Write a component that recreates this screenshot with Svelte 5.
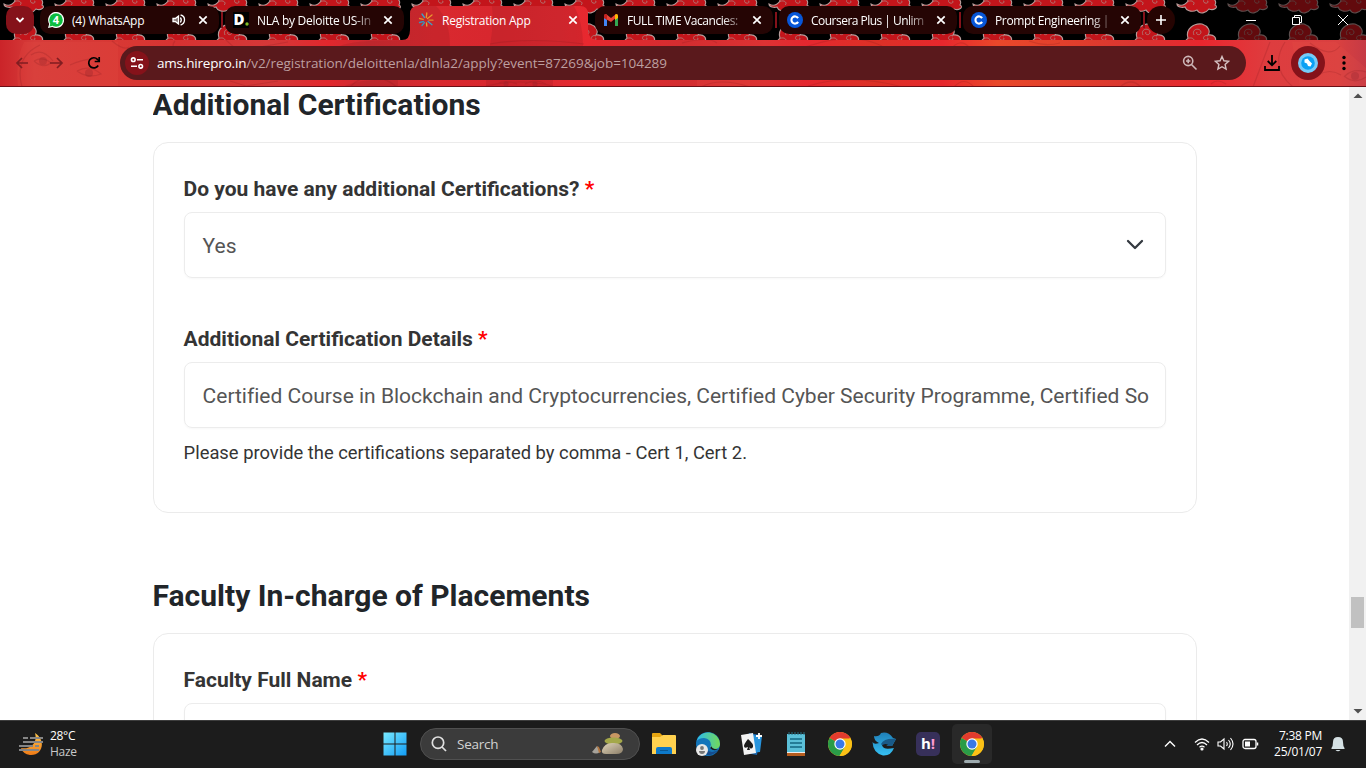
<script>
  const tabs = [
    { title: '(4) WhatsApp', icon: 'wa', audio: true, w: 179, track: -0.17 },
    { title: 'NLA by Deloitte US-In', icon: 'del', fade: true, w: 179, track: -0.27 },
    { title: 'Registration App', icon: 'reg', active: true, w: 179, track: -0.25 },
    { title: 'FULL TIME Vacancies:', icon: 'gmail', fade: true, w: 178, track: -0.42 },
    { title: 'Coursera Plus | Unlim', icon: 'cour', fade: true, w: 178, track: -0.52 },
    { title: 'Prompt Engineering |', icon: 'cour', fade: true, w: 178, track: -0.35 }
  ];
  const clouds = Array.from({ length: 28 }, (_, i) => i * 51 - 47);
</script>

{#snippet chrome()}
  <svg width="24" height="24" viewBox="0 0 24 24">
    <circle cx="12" cy="12" r="12" fill="#fbc116" />
    <path d="M12 12 1.6 6A12 12 0 0 1 22.4 6Z" fill="#e33b2e" />
    <path d="M1.6 6A12 12 0 0 0 11.5 24L17.2 15 12 12Z" fill="#2a9c48" />
    <path d="M12 6.5H22.6A12 12 0 0 1 11.5 24L17 14.5Z" fill="#fbc116" />
    <circle cx="12" cy="12" r="5.7" fill="#fff" />
    <circle cx="12" cy="12" r="4.5" fill="#3978e8" />
  </svg>
{/snippet}

<div class="screen">
  <header>
    <svg class="theme" width="1366" height="87" viewBox="0 0 1366 87">
      <defs>
        <linearGradient id="bar" x1="0" x2="1366" y1="0" y2="0" gradientUnits="userSpaceOnUse">
          <stop offset="0" stop-color="#cb2429" /><stop offset=".025" stop-color="#d63c3a" />
          <stop offset=".1" stop-color="#d83733" /><stop offset=".13" stop-color="#d73232" />
          <stop offset=".2" stop-color="#d43838" /><stop offset=".24" stop-color="#e2272d" />
          <stop offset=".27" stop-color="#c92b31" /><stop offset=".32" stop-color="#d9292f" />
          <stop offset=".36" stop-color="#d8272e" /><stop offset=".41" stop-color="#e02a31" />
          <stop offset=".43" stop-color="#e8282f" /><stop offset=".5" stop-color="#d32d30" />
          <stop offset=".56" stop-color="#dd3233" /><stop offset=".59" stop-color="#e5272f" />
          <stop offset=".64" stop-color="#dc3126" /><stop offset=".69" stop-color="#e7272d" />
          <stop offset=".73" stop-color="#e9482a" /><stop offset=".79" stop-color="#e03d2c" />
          <stop offset=".83" stop-color="#d93531" /><stop offset=".88" stop-color="#ea262e" />
          <stop offset=".93" stop-color="#de3d3f" /><stop offset=".98" stop-color="#d94040" /><stop offset="1" stop-color="#c53a45" />
        </linearGradient>
        <clipPath id="toolbar-shape">
          <path d="M0 40H402Q410 40 410 30V14Q410 6 418 6H580Q588 6 588 14V30Q588 40 598 40H1366V87H0Z" />
        </clipPath>
        <g id="cloud">
          <path d="M0 17C5 20 8 18 11 14C8 5 17-1 25 0C31 2 34 7 31 11C37 10 40 14 38 18C42 20 37 24 32 22C29 26 23 28 20 23C14 26 9 23 8 20C5 21 0 20 0 17Z" fill="#c3151b" stroke="#b69b99" stroke-width="1.1" />
          <path d="M17 11C14 5 23 3 24 8C24 12 18 11 20 8M31 12C27 10 25 15 28 16C31 17 32 14 30 14M10 15C15 12 19 16 16 18" fill="none" stroke="#af8582" stroke-width=".8" />
        </g>
      </defs>
      <rect width="1366" height="40" fill="#000" />
      {#each clouds as x}
        <g opacity={x > 1200 ? 0.5 : 1}>
          <use href="#cloud" x={x} y="-13" />
          <use href="#cloud" x={x} y="24" />
        </g>
      {/each}
      <g clip-path="url(#toolbar-shape)">
        <rect width="1366" height="87" fill="url(#bar)" />
        <path d="M410 6H436Q450 20 450 46H340Q352 40 410 40ZM492 6H574Q583 22 583 46H490Q494 24 492 6ZM486 80H553V87H486ZM342 87Q360 78 398 80V87Z" fill="#a01c25" opacity=".28" />
        <path d="M18 87Q15 60 24 42H118V87ZM697 80H750V87H697ZM1292 42H1336L1366 68V87H1300Z" fill="#ef5a4c" opacity=".16" />
        <g fill="none" stroke="#7c1720" stroke-width="1.2" opacity=".2">
          <path d="M22 87C17 69 21 54 40 45M31 55Q42 47 53 61M34 61Q43 56 51 63Q43 69 34 61M70 65Q88 57 100 60M77 71Q90 64 101 74Q88 79 77 71M112 41Q124 51 129 47M175 41Q170 47 178 52M226 40 238 51 288 42M230 81 246 86 278 81M350 87Q370 66 397 87M486 86Q520 78 553 86M497 84Q505 79 517 84M525 84Q535 78 546 84M490 44Q530 37 584 44M682 43Q708 36 717 43M701 87Q720 77 750 87M800 49Q850 30 882 46M808 86Q850 73 903 87M950 50Q960 37 970 48M954 87Q964 76 974 87M1029 41Q1045 47 1060 43M1120 87Q1131 77 1141 87M1211 84Q1217 78 1226 84M1253 87 1270 42M1293 87Q1269 67 1285 42M1310 43Q1330 59 1340 46M1318 75Q1330 68 1341 75M1345 76Q1353 68 1366 72M1344 76Q1355 85 1366 77" />
        </g>
        <g fill="#89212a" opacity=".28">
          <circle cx="43" cy="61" r="4" /><circle cx="89" cy="73" r="4" /><circle cx="1355" cy="76" r="4" /><circle cx="506" cy="84" r="2.5" /><circle cx="535" cy="84" r="2.5" />
        </g>
      </g>
      <rect y="86" width="1366" height="1" fill="#6c0f16" />
    </svg>

    <div class="strip">
      <div class="round"><svg width="28" height="28" fill="none" stroke="#fff" stroke-width="1.8"><path d="m10.5 12 3.500 3.500 3.500-3.500" /></svg></div>
      {#each tabs as t}
        <div class="tab {t.icon}" class:active={t.active} style="width:{t.w}px">
          <svg class="fav" width="16" height="16" viewBox="0 0 16 16">
            {#if t.icon === 'wa'}
              <path d="M0 16 1.2 12A8 8 0 1 1 4.3 15Z" fill="#fff" /><circle cx="8" cy="8" r="6.8" fill="#0cbd3f" /><path d="m1.500 14.600.9-3.300 2.500 2.500Z" fill="#0cbd3f" />
              <text x="8" y="12" text-anchor="middle" font-family="Noto Sans" font-size="11" font-weight="700" fill="#fff">4</text>
            {:else if t.icon === 'del'}
              <rect width="16" height="16" fill="#000" /><text x="0.5" y="13" font-family="Open Sans" font-size="15" font-weight="800" fill="#fff">D</text><circle cx="14" cy="12" r="1.700" fill="#83bd25" />
            {:else if t.icon === 'reg'}
              <g stroke-width="1.300" stroke-linecap="round"><path d="M8.300 5.500 8.800 1M9.500 6.500 14 3" stroke="#e9992e" /><path d="M6.500 5.500 4 2M10 9.500l4 3.200" stroke="#3b9fc8" /><path d="M5.200 7.300 1.500 6.500M11 8.200h4" stroke="#e4882d" /><path d="m5.500 9.500-4 1M6.500 10.500 4 13.500" stroke="#3b91b8" /><path d="m8.500 11 .3 3" stroke="#dcaa33" /></g>
            {:else if t.icon === 'gmail'}
              <path d="M1 14V4h3v10Z" fill="#4285f4" /><path d="M12 14V4h3v10Z" fill="#34a853" /><path d="M1 6V4Q1 2 3 2L8 6 13 2Q15 2 15 4L8 10Z" fill="#ea4335" /><path d="M1 6V4Q1 2 3 2L4 3V8Z" fill="#c5221f" /><path d="M12 8V3l1-1Q15 2 15 4V6Z" fill="#fbbc04" />
            {:else}
              <circle cx="8" cy="8" r="8" fill="#0756d8" /><path d="M11.100 6.100A3.600 3.600 0 1 0 11.100 9.900" fill="none" stroke="#fff" stroke-width="2.100" />
            {/if}
          </svg>
          <span class="title" class:fade={t.fade} style="letter-spacing:{t.track}px">{t.title}</span>
          {#if t.audio}
            <svg width="14" height="14" viewBox="0 0 14 14" fill="none" stroke="#fff" stroke-width="1.300"><path d="M1 5.500v3h2.300L6.500 11V3L3.300 5.500Z" fill="#fff" fill-opacity=".45" /><path d="M8.400 4.500Q10.200 7 8.400 9.500M8.600 2Q12.700 3 12.500 7T8.600 12" /></svg>
          {/if}
          <svg class="close" width="10" height="10" stroke="#fff" stroke-width="1.700"><path d="m1.300 1.300 7.400 7.400m0-7.400-7.400 7.400" /></svg>
        </div>
        {#if !t.active && !(t.icon === 'del')}<i class="sep"></i>{:else}<i class="gap"></i>{/if}
      {/each}
      <div class="round plus"><svg width="28" height="28" stroke="#fff" stroke-width="1.600"><path d="M14 9v10M9 14h10" /></svg></div>
      <svg class="win" width="110" height="20" fill="none" stroke="#fff" stroke-width="1"><path d="M6 10.500h10M52.500 7.500h7v7h-7zM54.500 7.500V5.500H60q1.500 0 1.500 1.500v5.500H60M98 5l10 10m0-10-10 10" /></svg>
    </div>

    <div class="bar">
      <svg width="14" height="14" class="back" fill="none" stroke="#811d21" stroke-width="1.700"><path d="M13 7H2m5-5L2 7l5 5" /></svg>
      <svg width="14" height="14" class="fwd" fill="none" stroke="#811d21" stroke-width="1.700"><path d="M0 7h12M7 2l5 5-5 5" /></svg>
      <svg width="14" height="14" class="reload" fill="none" stroke="#000" stroke-width="1.700"><path d="M11.200 9.500A5.100 5.100 0 1 1 10.500 3.300L12 5" /><path d="M12.200 1v4.500H7.700" /></svg>
      <div class="omni">
        <div class="chip"><svg width="14" height="14" fill="none" stroke="#fff" stroke-width="1.600"><circle cx="3.300" cy="3.700" r="1.800" /><path d="M7 3.700h6M1 10.300h6" /><circle cx="10.700" cy="10.300" r="1.800" /></svg></div>
        <div class="url"><b>ams.hirepro.in</b>/v2/registration/deloittenla/dlnla2/apply?event=87269&amp;job=104289</div>
        <svg class="mag" width="16" height="16" fill="none" stroke="#cdb7b8" stroke-width="1.600"><circle cx="6.200" cy="6" r="4.600" /><path d="m9.500 9.500 5 5M4 6h4.400M6.200 3.800v4.400" /></svg>
        <svg class="star" width="16" height="16" fill="none" stroke="#d5c1c2" stroke-width="1.400"><path d="m8 1.500 1.900 4.300 4.700.5-3.500 3.100 1 4.700L8 11.700l-4.100 2.400 1-4.700-3.500-3.100 4.700-.5Z" /></svg>
      </div>
      <svg class="down" width="16" height="16" fill="none" stroke="#000" stroke-width="1.800"><path d="M8 0v10M3.700 6 8 10.300 12.300 6M1 11v4h14v-4" /></svg>
      <div class="profile"><svg width="20" height="20"><circle cx="10" cy="10" r="10" fill="#76cbf8" /><circle cx="10" cy="10" r="6.800" fill="#0aa1f4" /><path d="M6.500 6.500 9.500 5.500 11.500 8 14 10.500 12.500 13.500 10 13 9 10.500 6.500 9.500Z" fill="#fff" /></svg></div>
      <svg class="dots" width="4" height="16"><circle cx="2" cy="2.500" r="1.700" /><circle cx="2" cy="8" r="1.700" /><circle cx="2" cy="13.500" r="1.700" /></svg>
    </div>
  </header>

  <main>
    <div class="content">
      <h2>Additional Certifications</h2>
      <section class="card first">
        <div class="label">Do you have any additional Certifications? <em>*</em></div>
        <div class="field">Yes<svg width="18" height="12" fill="none" stroke="#343a40" stroke-width="2.300" stroke-linecap="round" stroke-linejoin="round"><path d="m2 2 7 7 7-7" /></svg></div>
        <div class="label second">Additional Certification Details <em>*</em></div>
        <div class="field long">Certified Course in Blockchain and Cryptocurrencies, Certified Cyber Security Programme, Certified So</div>
        <p>Please provide the certifications separated by comma - Cert 1, Cert 2.</p>
      </section>
      <h2 class="lower">Faculty In-charge of Placements</h2>
      <section class="card">
        <div class="label">Faculty Full Name <em>*</em></div>
        <div class="field"></div>
      </section>
    </div>
    <div class="scroll">
      <svg width="17" height="17"><path d="M4.500 11h9L9 6.500Z" fill="#505050" /></svg>
      <div class="thumb"></div>
      <svg class="end" width="17" height="17"><path d="M4.500 6h9L9 10.500Z" fill="#505050" /></svg>
    </div>
  </main>

  <footer>
    <div class="weather">
      <svg width="26" height="26"><defs><linearGradient id="moon" x2="0" y2="1"><stop stop-color="#ffc64a" /><stop offset="1" stop-color="#ef7b17" /></linearGradient></defs><path d="M17 2C29 10 24 25 12 24Q5 23 3 17C12 19 20 12 17 2Z" fill="url(#moon)" /><path d="M5 7h5m2 0h13M5 11h20M1 15h14m2 0h4M1 19h20" stroke="#858585" stroke-width="1.800" /></svg>
      <div>28°C<br /><span>Haze</span></div>
    </div>
    <div class="apps">
      <svg class="start" width="24" height="24"><defs><linearGradient id="win" x2="24" y2="24" gradientUnits="userSpaceOnUse"><stop stop-color="#7aebff" /><stop offset="1" stop-color="#109bf5" /></linearGradient></defs><path d="M.5.500h11v11H.500ZM12.500.500h11v11h-11ZM.500 12.500h11v11H.500ZM12.500 12.500h11v11h-11Z" fill="url(#win)" /></svg>
      <div class="search">
        <svg width="16" height="16" fill="none" stroke="#e0e0e0" stroke-width="1.700"><circle cx="7" cy="6.700" r="5.700" /><path d="m11 11 4 4" /></svg>
        <span>Search</span>
        <svg class="stones" width="34" height="24"><defs><linearGradient id="rock" x2="1" y2="1"><stop stop-color="#e1d5ba" /><stop offset="1" stop-color="#8b7e68" /></linearGradient></defs><ellipse cx="24" cy="4" rx="5" ry="3" fill="#c99763" /><ellipse cx="22.500" cy="9" rx="9" ry="3.500" fill="#a4a849" /><path d="M11 18Q14 10 23 11Q31 11 32 17Q32 22 25 22H15Q10 22 11 18Z" fill="url(#rock)" /><path d="m1 20 5-6 3 6q-4 3-8 0Z" fill="#a7a39b" /><path d="m6 14 2 1 2 5-2 1Z" fill="#b4763e" /></svg>
      </div>
      <svg width="24" height="24"><path d="M0 2Q0 1 1 1h7l3 3v4H0Z" fill="#e6a511" /><path d="M0 5h8l3-2h12q1 0 1 1v18H0Z" fill="#ffd14f" /><path d="M4 22v-5q0-2 2-2h12q2 0 2 2v5Z" fill="#0d79c9" /><path d="M8 18.500h8" stroke="#095895" /></svg>
      <svg width="24" height="24"><defs><linearGradient id="edge" x2="1"><stop stop-color="#2bbcef" /><stop offset="1" stop-color="#73d957" /></linearGradient></defs><circle cx="12" cy="12" r="12" fill="#1475ba" /><path d="M.5 9A12 12 0 0 1 24 12Q24 17 18 17Q13 16 15 13Q15 7 8 6Q3 6 .5 9Z" fill="url(#edge)" /><path d="M9 13Q10 19 16 20Q20 20 23 17Q18 24 11 23Q5 17 9 13Z" fill="#154d8e" /><path d="M15 12q1 3-1 4 4 4 8 1-7 1-7-5Z" fill="#1c1c1c" /><circle cx="6" cy="18" r="6" fill="#e8e8e8" /><circle cx="6" cy="16" r="1.900" fill="#777" /><path d="M3 19h6q0 3-3 3t-3-3Z" fill="#777" /></svg>
      <svg width="24" height="24"><path d="m9 1 11 2-3 20-11-2Z" fill="#1764ad" /><path d="m12 3 10 1-2 16-9 1Z" fill="#2794dd" /><path d="m1 3 12-2 3 20-12 2Z" fill="#f3f3f3" /><path d="M8 7Q14 12 13 15q-2 3-4 0l1 3H7l1-3q-4 2-4-1 0-2 4-7Z" fill="#191919" /><path d="M16 4h6m-3-3v6" stroke="#fff" stroke-width="1.800" /></svg>
      <svg width="24" height="24"><path d="M3 2h18v19H3Z" fill="#5bc0d8" /><path d="M3 21h18v3H3Z" fill="#b65d1f" /><path d="M3 20.500h18" stroke="#eee" /><path d="M6 7h12M6 11h12M6 15h12" stroke="#146781" stroke-width="1.600" /><path d="M5 0v3m3-3v3m3-3v3m3-3v3m3-3v3m3-3v3" stroke="#276e82" /></svg>
      {@render chrome()}
      <svg width="24" height="24"><defs><linearGradient id="cblue" x2="0" y2="1"><stop stop-color="#1f7fb8" /><stop offset="1" stop-color="#36c1f3" /></linearGradient></defs><path d="M2 4Q7 5 9 1Q16-1 21 6L24 7 20 14H11Q11 18 22 16Q19 24 11 23.500Q1 21 .5 10Q2 13 7 11Q2 9 2 4Z" fill="url(#cblue)" /><path d="M9 12Q12 6 24 7L20 14H12Q10 14 9 12Z" fill="#195a88" /><path d="M10 13.500Q12 11 16 12.500L13 15Q11 16 10 13.500Z" fill="#1c1c1c" /></svg>
      <div class="hi">h<span>!</span></div>
      <div class="current">{@render chrome()}</div>
    </div>
    <div class="tray">
      <svg width="12" height="8" fill="none" stroke="#fff" stroke-width="1.400"><path d="m1 6.500 5-5 5 5" /></svg>
      <svg class="wifi" width="16" height="14" fill="none" stroke="#fff" stroke-width="1.200"><path d="M1 5.500Q8-1.500 15 5.500M3 8Q8 3 13 8M5.500 10.300Q8 8 10.500 10.300" /><circle cx="8" cy="12" r="1" fill="#fff" /></svg>
      <svg class="sound" width="18" height="14" fill="none" stroke="#fff" stroke-width="1.100"><path d="M1 5v4h2.500L7 12V2L3.500 5ZM9.500 5q1.500 2 0 4M11.500 3q3.500 4 0 8M13.500 1q5 6 0 12" /></svg>
      <svg class="battery" width="17" height="12" fill="none" stroke="#fff" stroke-width="1.300"><rect x="1" y="1.500" width="13" height="9" rx="2" /><path d="M15.500 4.500v3" stroke-width="1.500" /><path d="M3 3.500h5v5H3Z" fill="#fff" stroke="none" /></svg>
      <div class="clock">7:38 PM<br />25/01/07</div>
      <svg class="bell" width="14" height="16"><path d="M.500 12Q2 10 2 6Q2 1 7 1t5 5q0 4 1.500 6v1H.500ZM4.500 14h5Q7 16.500 4.500 14Z" fill="#d5e1e4" /></svg>
    </div>
  </footer>
</div>

<style>
  :global(body) { margin: 0; overflow: hidden; background: #fff; }
  svg { display: block; flex: none; }
  .screen { width: 1366px; height: 768px; display: flex; flex-direction: column; overflow: hidden; font-family: "Open Sans", sans-serif; }
  header { height: 87px; position: relative; flex: none; }
  .theme { position: absolute; left: 0; top: 0; z-index: 0; }
  .strip { position: relative; height: 34px; padding: 6px 16px 0 6px; box-sizing: border-box; display: flex; align-items: center; }
  .round { width: 28px; height: 28px; border-radius: 10px; background: #85121a; flex: none; margin-right: 6px; }
  .plus { border-radius: 50%; background: #250402; margin: 0; }
  .tab { height: 28px; flex: none; display: flex; align-items: center; box-sizing: border-box; padding: 0 11px 0 8px; background: #250504; border-radius: 10px; color: #fff; font-size: 12px; }
  .tab.active { background: none; }
  .fav { margin-right: 8px; }
  .title { flex: 1; min-width: 0; white-space: nowrap; line-height: 20px; padding-top: 2px; margin-right: 11px; }
  .title.fade { -webkit-mask-image: linear-gradient(to right, #000 84%, #0004 100%); mask-image: linear-gradient(to right, #000 84%, #0004 100%); }
  .wa .title { margin-right: 9px; }
  .wa .close { margin-left: 12px; }
  .sep { width: 2px; height: 16px; background: #85121a; margin: 0 2px; flex: none; }
  .gap { width: 6px; flex: none; }
  .win { margin-left: auto; }
  .bar { position: relative; height: 46px; margin-top: 6px; display: flex; align-items: center; box-sizing: border-box; padding-left: 15px; }
  .fwd { margin-left: 21px; }
  .reload { margin-left: 23px; }
  .omni { width: 1126px; height: 34px; margin-left: 19px; border-radius: 17px; background: #5a191c; display: flex; align-items: center; box-sizing: border-box; padding: 0 16px 0 5px; }
  .chip { width: 24px; height: 24px; border-radius: 50%; background: #85121a; display: grid; place-items: center; }
  .url { flex: 1; margin-left: 8px; color: #bd9fa0; font-size: 13.500px; line-height: 20px; white-space: nowrap; letter-spacing: -0.03px; }
  .url b { font-weight: 400; color: #fff; letter-spacing: -0.19px; }
  .star { margin-left: 16px; }
  .down { margin-left: 18px; }
  .profile { width: 34px; height: 34px; border-radius: 50%; background: #85121a; margin-left: 11px; display: grid; place-items: center; }
  .dots { margin-left: 17px; }
  main { height: 633px; display: flex; justify-content: space-between; overflow: hidden; background: #fff; font-family: Roboto, sans-serif; }
  .content { width: 1044px; margin-left: 152.600px; height: 633px; overflow: hidden; }
  h2 { margin: 0 0 19px; height: 36px; line-height: 36px; font-size: 30px; font-weight: 700; color: #212529; white-space: nowrap; }
  h2.lower { margin-top: 65px; }
  .card { box-sizing: border-box; border: 1px solid #ebebeb; border-radius: 15px; padding: 29px 30px; height: 371px; }
  .label { height: 34px; line-height: 34px; margin-bottom: 6px; color: #343434; font-size: 21px; font-weight: 700; white-space: nowrap; }
  .label em { font-style: normal; color: #f00; }
  .second { margin-top: 44px; }
  .field { height: 66px; box-sizing: border-box; border: 1px solid #ececec; border-radius: 8px; box-shadow: 0 1px 2px #00000008; padding: 2px 18px 0; display: flex; align-items: center; justify-content: space-between; color: #555; font-size: 21px; white-space: nowrap; }
  .field.long { letter-spacing: -0.007px; }
  .field svg { margin: 0 3px 2px 0; }
  p { margin: 12px 0 0; font-size: 18.370px; line-height: 26px; color: #343434; }
  .scroll { width: 17px; background: #f1f1f1; height: 633px; display: flex; flex-direction: column; }
  .thumb { width: 13px; height: 31px; margin: 493px 2px 0; background: #c1c1c1; }
  .scroll .end { margin-top: auto; }
  footer { height: 48px; flex: none; background: #1c1c1c; border-top: 1px solid #3d3d3d; box-sizing: border-box; display: flex; align-items: center; color: #fff; padding: 0 21px 1px 0; }
  .weather { width: 383px; flex: none; display: flex; align-items: center; box-sizing: border-box; padding-left: 18px; gap: 6px; font-size: 12px; line-height: 16px; letter-spacing: -.3px; }
  .weather span { color: #c9c9c9; }
  .apps { display: flex; align-items: center; gap: 20px; }
  .search { width: 220px; height: 32px; box-sizing: border-box; border: 1px solid #505050; border-radius: 16px; background: #3b3b3b; display: flex; align-items: center; padding: 0 14px 0 10px; margin: 0 -8px 0 -7px; }
  .search span { margin-left: 10px; font-size: 13.500px; color: #d2d2d2; letter-spacing: -.25px; flex: 1; }
  .hi { width: 24px; height: 24px; border-radius: 5px; background: #37305a; font: 700 15px/23px "Open Sans", sans-serif; text-align: center; }
  .hi span { color: #ff9bd2; }
  .current { width: 40px; height: 40px; margin-left: -8px; background: #292929; border-radius: 5px; display: grid; place-items: center; position: relative; }
  .current::after { content: ""; position: absolute; bottom: 1px; width: 16px; height: 3px; border-radius: 2px; background: #9eabaf; }
  .tray { display: flex; align-items: center; margin-left: auto; }
  .wifi { margin-left: 18px; }
  .sound { margin-left: 7px; }
  .battery { margin-left: 7px; }
  .clock { width: 63px; margin-right: 1px; text-align: right; font-size: 12px; line-height: 16px; letter-spacing: -.25px; }
  .bell { margin-left: 8px; }
</style>
